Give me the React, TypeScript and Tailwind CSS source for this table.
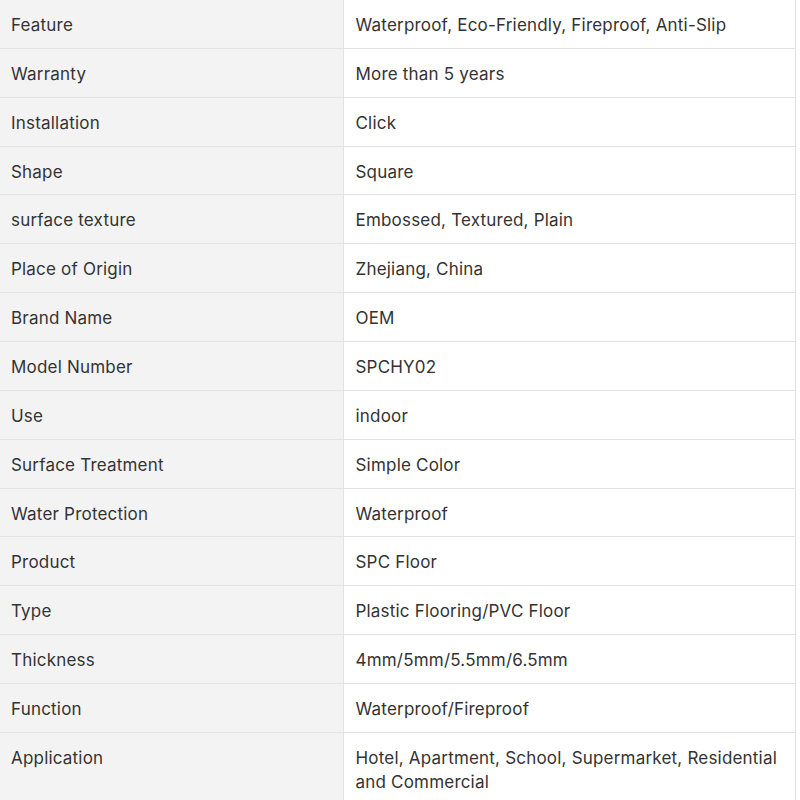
const specs: [string, string][] = [
  ['Feature', 'Waterproof, Eco-Friendly, Fireproof, Anti-Slip'],
  ['Warranty', 'More than 5 years'],
  ['Installation', 'Click'],
  ['Shape', 'Square'],
  ['surface texture', 'Embossed, Textured, Plain'],
  ['Place of Origin', 'Zhejiang, China'],
  ['Brand Name', 'OEM'],
  ['Model Number', 'SPCHY02'],
  ['Use', 'indoor'],
  ['Surface Treatment', 'Simple Color'],
  ['Water Protection', 'Waterproof'],
  ['Product', 'SPC Floor'],
  ['Type', 'Plastic Flooring/PVC Floor'],
  ['Thickness', '4mm/5mm/5.5mm/6.5mm'],
  ['Function', 'Waterproof/Fireproof'],
  ['Application', 'Hotel, Apartment, School, Supermarket, Residential and Commercial'],
];

export default function App() {
  return (
    <div className="w-[800px] h-[800px] overflow-hidden bg-white font-['Inter',sans-serif] text-[17px] tracking-[0.2px] leading-[23.86px] text-[#333333]">
      <table className="w-[796px] border-collapse table-fixed">
        <tbody>
          {specs.map(([label, value]) => (
            <tr key={label} className="border-b border-[#e3e3e3]">
              <td className="w-[343px] align-top bg-[#f3f3f3] border-r border-[#e3e3e3] pt-[14px] pb-[10px] pl-[11px] pr-3">
                {label}
              </td>
              <td className="align-top border-r border-[#e3e3e3] pt-[14px] pb-[10px] pl-3 pr-3">
                {value}
              </td>
            </tr>
          ))}
        </tbody>
      </table>
    </div>
  );
}
